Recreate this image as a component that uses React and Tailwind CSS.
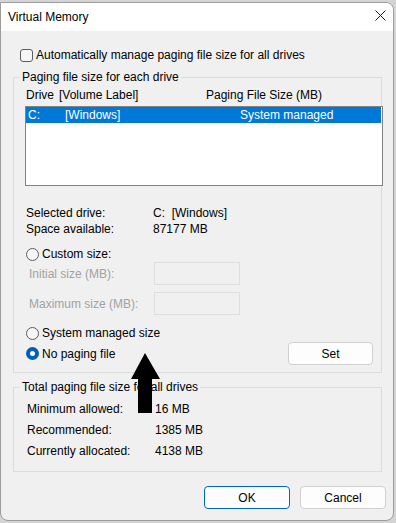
export default function App() {
  const Radio = ({ checked }) =>
    checked ? (
      <span className="w-[13px] h-[13px] rounded-full bg-[#005fb8] flex items-center justify-center shrink-0">
        <span className="w-[5px] h-[5px] rounded-full bg-white" />
      </span>
    ) : (
      <span className="w-[13px] h-[13px] rounded-full border border-[#5d5d5d] bg-[#f6f6f6] shrink-0" />
    );

  return (
    <div className="relative w-[396px] h-[523px] overflow-hidden bg-[#d4d4d4] font-['Liberation_Sans',sans-serif] text-[12px] leading-[16px] text-black">
      <div className="mt-[2px] w-[394px] h-[519px] border border-[#9c9c9c] rounded-tr-[8px] rounded-b-[8px] bg-[#f0f0f0] flex flex-col overflow-hidden">
        <div className="h-[28px] shrink-0 bg-white flex items-center justify-between pl-[7px] pr-[7px]">
          <span>Virtual Memory</span>
          <svg width="11" height="11" viewBox="0 0 11 11" className="self-start mt-[7px]">
            <path d="M0.5 0.5 L10.5 10.5 M10.5 0.5 L0.5 10.5" stroke="#1a1a1a" strokeWidth="1" fill="none" />
          </svg>
        </div>
        <div className="flex-1 flex flex-col pl-[12px] pr-[11px]">
          <div className="mt-[16px] h-[16px] flex items-center ml-[7px]">
            <span className="w-[13px] h-[13px] rounded-[3px] border border-[#5d5d5d] bg-[#f6f6f6] shrink-0" />
            <span className="ml-[3px]">Automatically manage paging file size for all drives</span>
          </div>

          <fieldset className="mt-[6px] border border-[#dcdcdc] pb-[7px]">
            <legend className="ml-[6px] px-[2px]">Paging file size for each drive</legend>
            <div className="mt-[2px] flex h-[16px] items-center pl-[12px]">
              <span className="w-[33px]">Drive</span>
              <span className="w-[147px]">[Volume Label]</span>
              <span>Paging File Size (MB)</span>
            </div>
            <div className="mt-[3px] ml-[11px] -mr-[2px] h-[80px] border border-[#828282] bg-white pr-[1px]">
              <div className="h-[16px] bg-[#0078d7] text-white flex items-center pl-[2px]">
                <span className="w-[37px]">C:</span>
                <span className="w-[175px]">[Windows]</span>
                <span>System managed</span>
              </div>
            </div>
            <div className="mt-[19px] pl-[12px] flex h-[16px] items-center">
              <span className="w-[127px]">Selected drive:</span>
              <span>C:&nbsp; [Windows]</span>
            </div>
            <div className="pl-[12px] flex h-[16px] items-center">
              <span className="w-[127px]">Space available:</span>
              <span>87177 MB</span>
            </div>
            <div className="mt-[9px] pl-[12px] flex h-[16px] items-center">
              <Radio />
              <span className="ml-[3px]">Custom size:</span>
            </div>
            <div className="pl-[15px] flex h-[23px] items-center text-[#a2a2a2]">
              <span className="w-[125px]">Initial size (MB):</span>
              <span className="w-[86px] h-[23px] border border-[#dedede] bg-[#f0f0f0]" />
            </div>
            <div className="mt-[7px] pl-[15px] flex h-[23px] items-center text-[#a2a2a2]">
              <span className="w-[125px]">Maximum size (MB):</span>
              <span className="w-[86px] h-[23px] border border-[#dedede] bg-[#f0f0f0]" />
            </div>
            <div className="mt-[10px] pl-[12px] flex h-[16px] items-center">
              <Radio />
              <span className="ml-[3px]">System managed size</span>
            </div>
            <div className="mt-[1px] pl-[12px] pr-[8px] flex h-[23px] items-center">
              <Radio checked />
              <span className="ml-[3px]">No paging file</span>
              <button className="ml-auto w-[85px] h-[23px] rounded-[4px] border border-[#d0d0d0] bg-[#fdfdfd] flex items-center justify-center">
                Set
              </button>
            </div>
          </fieldset>

          <fieldset className="mt-[6px] border border-[#dcdcdc] pb-[12px]">
            <legend className="ml-[6px] px-[2px]">Total paging file size for all drives</legend>
            <div className="mt-[6px] flex flex-col gap-[5px] pl-[13px]">
              <div className="flex h-[16px] items-center">
                <span className="w-[128px]">Minimum allowed:</span>
                <span>16 MB</span>
              </div>
              <div className="flex h-[16px] items-center">
                <span className="w-[128px]">Recommended:</span>
                <span>1385 MB</span>
              </div>
              <div className="flex h-[16px] items-center">
                <span className="w-[128px]">Currently allocated:</span>
                <span>4138 MB</span>
              </div>
            </div>
          </fieldset>

          <div className="mt-[14px] -mr-[4px] flex justify-end gap-[10px]">
            <button className="w-[86px] h-[23px] rounded-[4px] border border-[#0067c0] bg-[#fdfdfd] flex items-center justify-center">
              OK
            </button>
            <button className="w-[86px] h-[23px] rounded-[4px] border border-[#d0d0d0] bg-[#fdfdfd] flex items-center justify-center">
              Cancel
            </button>
          </div>
        </div>
      </div>

      <svg className="absolute left-[130px] top-[352px]" width="32" height="62" viewBox="0 0 32 62">
        <polygon points="15,1 1,27 8,27 8,61 22,61 22,27 30,27" fill="#000" />
      </svg>
    </div>
  );
}
